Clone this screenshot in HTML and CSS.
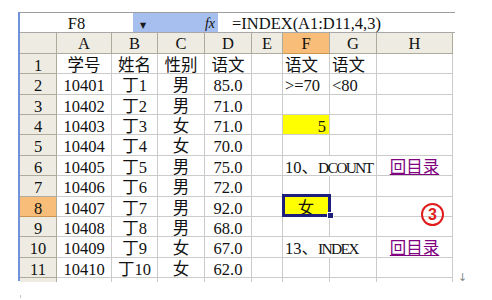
FILE: index.html
```html
<!DOCTYPE html>
<html lang="zh-CN">
<head>
    <meta charset="UTF-8">
    <title>INDEX</title>
    <link rel="stylesheet" href="styles.css">
</head>
<body>
    <div class="window">
        <div class="formula-bar">
            <div class="name-box">F8</div>
            <div class="fx-area"><span class="drop">&#9660;</span><span class="fx">fx</span></div>
            <div class="formula">=INDEX(A1:D11,4,3)</div>
        </div>
        <div class="grid">
            <div class="corner"></div>
            <div class="col-head">A</div>
            <div class="col-head">B</div>
            <div class="col-head">C</div>
            <div class="col-head">D</div>
            <div class="col-head">E</div>
            <div class="col-head active">F</div>
            <div class="col-head">G</div>
            <div class="col-head">H</div>

            <div class="row-head">1</div>
            <div class="c mid">学号</div><div class="c mid">姓名</div><div class="c mid">性别</div><div class="c mid">语文</div>
            <div class="c"></div><div class="c">语文</div><div class="c">语文</div><div class="c"></div>

            <div class="row-head">2</div>
            <div class="c mid">10401</div><div class="c mid">丁1</div><div class="c mid">男</div><div class="c mid">85.0</div>
            <div class="c"></div><div class="c">&gt;=70</div><div class="c">&lt;80</div><div class="c"></div>

            <div class="row-head">3</div>
            <div class="c mid">10402</div><div class="c mid">丁2</div><div class="c mid">男</div><div class="c mid">71.0</div>
            <div class="c"></div><div class="c"></div><div class="c"></div><div class="c"></div>

            <div class="row-head">4</div>
            <div class="c mid">10403</div><div class="c mid">丁3</div><div class="c mid">女</div><div class="c mid">71.0</div>
            <div class="c"></div><div class="c right yellow">5</div><div class="c"></div><div class="c"></div>

            <div class="row-head">5</div>
            <div class="c mid">10404</div><div class="c mid">丁4</div><div class="c mid">女</div><div class="c mid">70.0</div>
            <div class="c"></div><div class="c"></div><div class="c"></div><div class="c"></div>

            <div class="row-head">6</div>
            <div class="c mid">10405</div><div class="c mid">丁5</div><div class="c mid">男</div><div class="c mid">75.0</div>
            <div class="c"></div><div class="c spill">10、<span class="caps">DCOUNT</span></div><div class="c"></div><div class="c mid"><a class="link" href="#">回目录</a></div>

            <div class="row-head">7</div>
            <div class="c mid">10406</div><div class="c mid">丁6</div><div class="c mid">男</div><div class="c mid">72.0</div>
            <div class="c"></div><div class="c"></div><div class="c"></div><div class="c"></div>

            <div class="row-head active">8</div>
            <div class="c mid">10407</div><div class="c mid">丁7</div><div class="c mid">男</div><div class="c mid">92.0</div>
            <div class="c"></div><div class="c mid yellow selected">女</div><div class="c"></div>
            <div class="c note-cell"><span class="note">3</span></div>

            <div class="row-head">9</div>
            <div class="c mid">10408</div><div class="c mid">丁8</div><div class="c mid">男</div><div class="c mid">68.0</div>
            <div class="c"></div><div class="c"></div><div class="c"></div><div class="c"></div>

            <div class="row-head">10</div>
            <div class="c mid">10409</div><div class="c mid">丁9</div><div class="c mid">女</div><div class="c mid">67.0</div>
            <div class="c"></div><div class="c spill">13、<span class="caps">INDEX</span></div><div class="c"></div><div class="c mid"><a class="link" href="#">回目录</a></div>

            <div class="row-head">11</div>
            <div class="c mid">10410</div><div class="c mid">丁10</div><div class="c mid">女</div><div class="c mid">62.0</div>
            <div class="c"></div><div class="c"></div><div class="c"></div><div class="c"></div>

            <div class="row-head stub"></div>
            <div class="c stub"></div><div class="c stub"></div><div class="c stub"></div><div class="c stub"></div>
            <div class="c stub"></div><div class="c stub"></div><div class="c stub"></div><div class="c stub"></div>
        </div>
        <span class="para-mark">&#8595;</span>
    </div>
    <span class="corner-mark"></span>
</body>
</html>
```

FILE: styles.css
```css
body {
    margin: 0;
    background-color: #fff;
    font-family: "Liberation Serif", "Noto Sans CJK SC", serif;
    font-size: 16.5px;
    color: #111;
    position: relative;
    height: 300px;
}
.window {
    position: relative;
    width: 435px;
    margin: 12px 0 0 18px;
    border-left: 2px solid #6f92d8;
}
.formula-bar {
    display: flex;
    height: 21px;
    border-top: 1px solid #9d9d9d;
    border-bottom: 1px solid #a8a8a8;
    box-sizing: border-box;
    line-height: 16px;
}
.name-box {
    width: 113px;
    text-align: center;
    padding-top: 3px;
}
.fx-area {
    width: 85px;
    display: flex;
    justify-content: space-between;
    background-color: #a7bfee;
    padding: 0 3px 0 7px;
    box-sizing: border-box;
}
.drop {
    font-family: "DejaVu Sans", sans-serif;
    font-size: 8px;
    color: #1a1a1a;
    padding-top: 5px;
}
.fx {
    font-style: italic;
    font-size: 14px;
    padding-top: 3px;
}
.formula {
    flex: 1;
    padding: 3px 0 0 14px;
    white-space: nowrap;
}
.grid {
    display: grid;
    grid-template-columns: 37px 55px 46px 47px 47px 31px 47px 47px 76px;
    grid-template-rows: 21px repeat(11, 20.36px) 3px;
}
.corner,
.col-head,
.row-head {
    background-color: #eeece2;
    border-right: 1px solid #aeab9c;
    border-bottom: 1px solid #aeab9c;
    box-sizing: border-box;
    text-align: center;
    line-height: 16px;
}
.col-head {
    padding-top: 3px;
}
.row-head {
    padding-top: 4px;
}
.col-head.active,
.row-head.active {
    background-color: #f8bd78;
    border-bottom-color: #c99550;
}
.c {
    position: relative;
    border-right: 1px solid #cbcbcb;
    border-bottom: 1px solid #cbcbcb;
    box-sizing: border-box;
    line-height: 16px;
    padding: 4px 0 0 2px;
    white-space: nowrap;
}
.c.mid {
    text-align: center;
    padding-left: 0;
}
.c.right {
    text-align: right;
    padding-right: 3px;
}
.c.spill {
    border-right-color: transparent;
}
.caps {
    letter-spacing: -1.7px;
    font-size: 15.5px;
}
.yellow {
    background-color: #ffff00;
}
.selected::after {
    content: "";
    position: absolute;
    top: -3px;
    left: -1px;
    right: -2px;
    bottom: -1px;
    border: 3px solid #1e1f7c;
}
.selected::before {
    content: "";
    position: absolute;
    right: -5px;
    bottom: -3px;
    width: 5px;
    height: 5px;
    background-color: #1e1f7c;
    border: 1px solid #fff;
    z-index: 1;
}
.link {
    color: #800080;
    text-decoration: underline;
}
.note {
    position: absolute;
    right: 8px;
    top: 6px;
    width: 19px;
    height: 19px;
    border: 2px solid #e01b1b;
    border-radius: 50%;
    color: #e01b1b;
    font-family: "Liberation Sans", sans-serif;
    font-weight: bold;
    font-size: 16px;
    line-height: 19px;
    text-align: center;
}
.stub {
    border-bottom: none;
}
.para-mark {
    position: absolute;
    left: 438px;
    top: 259px;
    font-family: "DejaVu Sans", sans-serif;
    font-size: 11px;
    color: #8a8a8a;
}
.corner-mark {
    position: absolute;
    left: 20px;
    top: 295px;
    width: 1px;
    height: 3px;
    background-color: #c8c8c8;
}
```
